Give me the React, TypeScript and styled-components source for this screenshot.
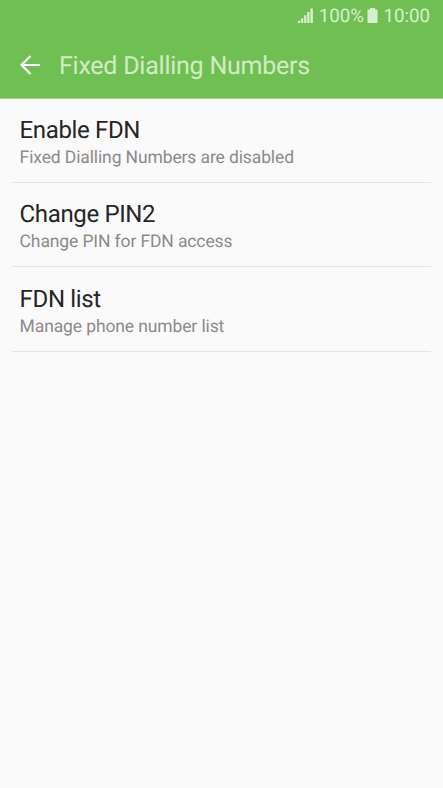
import React from "react";
import styled, { createGlobalStyle } from "styled-components";

const GlobalStyle = createGlobalStyle`
  * { box-sizing: border-box; }
  body {
    margin: 0;
    background: #fafafa;
    font-family: Roboto, "Liberation Sans", sans-serif;
    text-rendering: geometricPrecision;
  }
`;

const Screen = styled.main`
  width: 443px;
  height: 788px;
  background: #fafafa;
`;

const Header = styled.header`
  height: 99px;
  background: #70bf53;
  border-bottom: 1px solid #a3cd93;
`;

const StatusBar = styled.div`
  height: 32px;
  padding-right: 13px;
  display: flex;
  justify-content: flex-end;
  align-items: center;
  color: #d8efcf;
  font-size: 18.7px;
  line-height: 32px;
`;

const SignalIcon = styled.svg`
  margin: 0 5.5px 2px 0;
`;

const BatteryIcon = styled.svg`
  margin: 0 5.5px 2px 3px;
`;

const TitleBar = styled.div`
  height: 66px;
  padding-left: 20px;
  display: flex;
  align-items: center;
`;

const BackButton = styled.button`
  width: 21px;
  height: 20px;
  padding: 0;
  border: 0;
  background: none;
  display: flex;
`;

const Title = styled.h1`
  margin: 3px 0 0 18px;
  color: #d0ecc5;
  font-size: 25px;
  font-weight: 400;
  line-height: 30px;
  letter-spacing: -0.24px;
`;

const List = styled.ul`
  margin: 0;
  padding: 0 12px;
  list-style: none;
`;

const Row = styled.li`
  height: 84.2px;
  padding: 16.25px 7.6px 0;
  border-bottom: 1px solid #e4e4e4;
`;

const RowTitle = styled.div`
  color: #252525;
  font-size: 24px;
  line-height: 30px;
  letter-spacing: -0.36px;
`;

const RowDetail = styled.div`
  color: #8b8b8b;
  font-size: 17.5px;
  line-height: 26px;
  letter-spacing: -0.12px;
`;

const items = [
  { title: "Enable FDN", detail: "Fixed Dialling Numbers are disabled" },
  { title: "Change PIN2", detail: "Change PIN for FDN access" },
  { title: "FDN list", detail: "Manage phone number list" },
];

export default function App() {
  return (
    <Screen>
      <GlobalStyle />
      <Header>
        <StatusBar>
          <SignalIcon width="15" height="15" viewBox="0 0 15 15" fill="currentColor">
            <path d="M0 12.7h2.2V15H0zM3 10.2h2.3V15H3zM6.1 7.2h2.3V15H6.1zM9.2 4h2.3v11H9.2zM12.4 0.5h2.5V15h-2.5z" />
          </SignalIcon>
          <span>100%</span>
          <BatteryIcon width="11" height="15" viewBox="0 0 11 15" fill="currentColor">
            <path d="M3 0h5v1.6h2.5V15H.5V1.6H3z" />
          </BatteryIcon>
          <span>10:00</span>
        </StatusBar>
        <TitleBar>
          <BackButton aria-label="Back">
            <svg width="21" height="20" viewBox="0 0 21 20" fill="none" stroke="#fff" strokeWidth="2.2">
              <path d="M20 10H2M10.5 1L1.5 10l9 9" />
            </svg>
          </BackButton>
          <Title>Fixed Dialling Numbers</Title>
        </TitleBar>
      </Header>
      <List>
        {items.map((item) => (
          <Row key={item.title}>
            <RowTitle>{item.title}</RowTitle>
            <RowDetail>{item.detail}</RowDetail>
          </Row>
        ))}
      </List>
    </Screen>
  );
}
